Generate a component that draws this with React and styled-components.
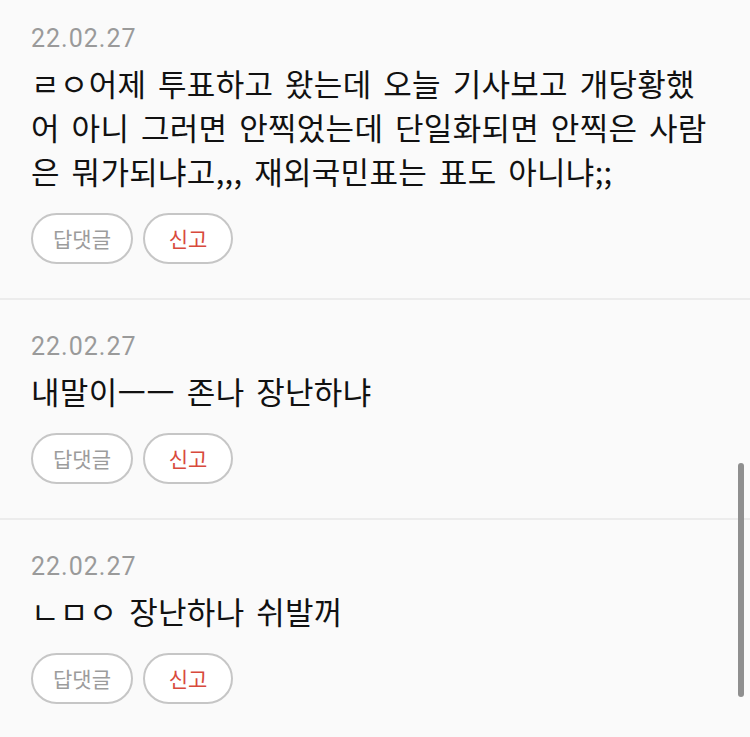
import styled, { createGlobalStyle } from "styled-components";

const GlobalStyle = createGlobalStyle`
  html, body {
    margin: 0;
    padding: 0;
    background: #fafafa;
    overflow: hidden;
  }
  body {
    font-family: "Noto Sans CJK KR", "Noto Sans", sans-serif;
  }
`;

const Screen = styled.div`
  position: relative;
  width: 750px;
  height: 737px;
  overflow: hidden;
  background: #fafafa;
`;

// list is scrolled a little, so the first comment starts above the top edge
const Feed = styled.div`
  display: flex;
  flex-direction: column;
  margin-top: -10px;
`;

const Comment = styled.div`
  display: flex;
  flex-direction: column;
  border-top: 2px solid #ececec;
  padding: 33px 40px 34px 31px;
`;

const DateLine = styled.div`
  font-family: Roboto, "Noto Sans", sans-serif;
  font-size: 25px;
  line-height: 28px;
  letter-spacing: 1px;
  color: #9a9a9a;
`;

const Body = styled.p`
  margin: 8px 0 20px;
  font-size: 31px;
  line-height: 44px;
  letter-spacing: 0.3px;
  word-spacing: 4.5px;
  color: #111111;
  word-break: normal;
`;

const Actions = styled.div`
  display: flex;
  gap: 10px;
`;

const Pill = styled.button`
  box-sizing: border-box;
  height: 51px;
  min-width: 90px;
  padding: 0 20px;
  border: 2px solid #c6c6c6;
  border-radius: 26px;
  background: #ffffff;
  font-family: "Noto Sans CJK KR", sans-serif;
  font-size: 21px;
  line-height: 47px;
  color: ${({ $danger }) => ($danger ? "#d8493c" : "#9c9c9c")};
  cursor: pointer;
`;

const ScrollThumb = styled.div`
  position: absolute;
  right: 6px;
  top: 463px;
  width: 6px;
  height: 234px;
  border-radius: 3px;
  background: #8f8f8f;
`;

const comments = [
  {
    id: 1,
    date: "22.02.27",
    text: "ㄹㅇ어제 투표하고 왔는데 오늘 기사보고 개당황했어 아니 그러면 안찍었는데 단일화되면 안찍은 사람은 뭐가되냐고,,, 재외국민표는 표도 아니냐;;",
  },
  { id: 2, date: "22.02.27", text: "내말이ㅡㅡ 존나 장난하냐" },
  { id: 3, date: "22.02.27", text: "ㄴㅁㅇ 장난하나 쉬발꺼" },
];

export default function App() {
  return (
    <Screen>
      <GlobalStyle />
      <Feed>
        {comments.map((c) => (
          <Comment key={c.id}>
            <DateLine>{c.date}</DateLine>
            <Body>{c.text}</Body>
            <Actions>
              <Pill>답댓글</Pill>
              <Pill $danger>신고</Pill>
            </Actions>
          </Comment>
        ))}
      </Feed>
      <ScrollThumb />
    </Screen>
  );
}
